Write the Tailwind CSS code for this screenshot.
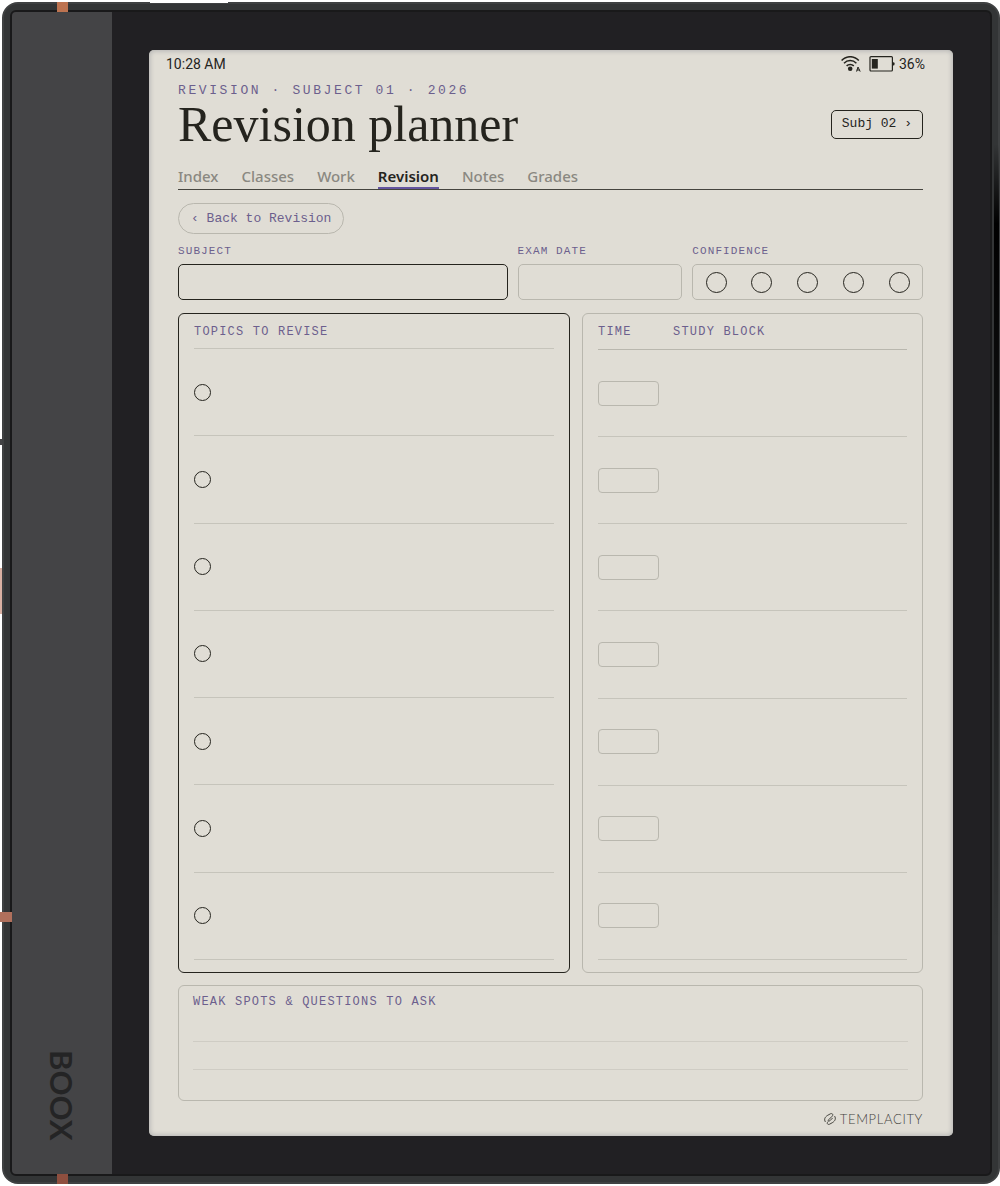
<!DOCTYPE html>
<html lang="en">
<head>
    <meta charset="UTF-8">
    <meta name="viewport" content="width=device-width, initial-scale=1.0">
    <title>Revision planner</title>
    <script src="https://cdn.jsdelivr.net/npm/@tailwindcss/browser@4"></script>
</head>
<body class="bg-white font-['Roboto',sans-serif] text-[#25241e]">
    <!-- Device body -->
    <div class="min-h-screen flex py-0.5 pl-0.5">
        <div class="relative flex-1 flex p-1.5 rounded-[16px] bg-[#333536] border-2 border-[#3f4142]">
            <!-- Copper antenna strips -->
            <span class="absolute -top-0.5 left-[53px] w-[11px] h-2.5 bg-[#bd7350]"></span>
            <span class="absolute -bottom-0.5 left-[53px] w-[11px] h-2.5 bg-[#8f4f3f]"></span>
            <span class="absolute top-[908px] -left-1 w-3 h-2.5 bg-[#b0705c]"></span>
            <span class="absolute top-[564px] -left-1 w-0.5 h-[46px] bg-[#d9b0a2]"></span>
            <!-- Power button gap and side highlights -->
            <span class="absolute -top-0.5 left-[146px] w-[78px] h-px bg-white"></span>
            <span class="absolute top-[435px] -left-1 w-0.5 h-1.5 bg-[#444446]"></span>
            <span class="absolute top-[140px] bottom-[240px] -right-px w-[5px] bg-linear-to-b from-transparent via-black to-transparent from-0% via-10% to-100%"></span>

            <div class="flex-1 flex border-2 border-[#19191a] rounded-[6px] bg-[#212023]">
                <!-- Spine -->
                <div class="w-[100px] shrink-0 flex items-end justify-center pb-[34px] bg-[#444446] rounded-l-[4px]">
                    <span class="[writing-mode:vertical-rl] font-['Lato',sans-serif] font-bold text-[31px] leading-7 text-[#242425]">BOOX</span>
                </div>

                <!-- Bezel -->
                <div class="flex-1 flex px-[37px] py-[38px]">
                    <!-- Screen -->
                    <main class="flex-1 flex flex-col pl-[29px] pr-[30px] bg-[#e0ddd5] rounded-[5px] shadow-[inset_0_0_5px_1px_#b4b4b3]">
                        <!-- Status bar -->
                        <div class="-ml-3 -mr-0.5 h-7 flex items-center justify-between text-sm">
                            <span>10:28 AM</span>
                            <div class="flex items-center gap-1">
                                <svg class="w-5 h-4 mr-1" viewBox="0 0 20 16" fill="none" stroke="#25241e" stroke-width="1.5" aria-hidden="true">
                                    <path d="M.6 4.600C5.300-.6 13.100-.6 17.800 4.600M3 7.200c3.500-3.600 8.900-3.600 12.400 0M5.600 9.900c2-2 5.200-2 7.200 0"/>
                                    <circle cx="9.200" cy="12.800" r="2.300" fill="#25241e" stroke="none"/>
                                    <path d="M15.600 15.600l1.400-4.600 2.200 4.600M15.700 14h3" stroke-width="1"/>
                                </svg>
                                <svg class="w-[26px] h-4" viewBox="0 0 26 16" fill="none" aria-hidden="true">
                                    <rect x="1" y=".6" width="22.400" height="14.400" rx="1" stroke="#25241e" stroke-width="1.200"/>
                                    <rect x="2.800" y="3" width="6" height="9.600" fill="#25241e"/>
                                    <rect x="23.500" y="6.200" width="2" height="3.200" rx="1" fill="#25241e"/>
                                </svg>
                                <span>36%</span>
                            </div>
                        </div>

                        <!-- Header -->
                        <header class="pt-[5px] flex items-center justify-between">
                            <div>
                                <p class="font-['Liberation_Mono',monospace] text-[13px] leading-4 tracking-[0.2em] text-[#6c5f8d]">REVISION · SUBJECT 01 · 2026</p>
                                <h1 class="mb-1.5 font-['Liberation_Serif',serif] text-[50px] leading-[50px]">Revision planner</h1>
                            </div>
                            <button type="button" class="mt-2.5 h-[29px] px-2.5 border border-[#25241e] rounded-[5px] font-['Liberation_Mono',monospace] text-[13px]">Subj 02 ›</button>
                        </header>

                        <!-- Tabs -->
                        <nav class="mt-3 flex gap-[23px] border-b border-[#45443e] font-['Noto_Sans',sans-serif] text-[15px] leading-[18px] font-medium text-[#8a8881]">
                            <a href="#" class="pb-0.5">Index</a>
                            <a href="#" class="pb-0.5">Classes</a>
                            <a href="#" class="pb-0.5">Work</a>
                            <a href="#" class="pb-0.5 font-semibold text-[#25241e] border-b-2 border-[#6455a0]">Revision</a>
                            <a href="#" class="pb-0.5">Notes</a>
                            <a href="#" class="pb-0.5">Grades</a>
                        </nav>

                        <a href="#" class="mt-[13px] self-start h-[31px] px-3 flex items-center border border-[#b9b7ae] rounded-full font-['Liberation_Mono',monospace] text-[13px] text-[#6c5f8d]">‹ Back to Revision</a>

                        <!-- Subject fields -->
                        <div class="mt-2.5 grid grid-cols-[2fr_1fr_1.4fr] gap-2.5 font-['Liberation_Mono',monospace] text-[11px] leading-[14px] tracking-[0.1em] text-[#6c5f8d]">
                            <div class="flex flex-col gap-1.5">
                                <label for="subject">SUBJECT</label>
                                <input id="subject" type="text" class="w-full h-9 px-3 border border-[#25241e] rounded-[5px]">
                            </div>
                            <div class="flex flex-col gap-1.5">
                                <label for="exam-date">EXAM DATE</label>
                                <input id="exam-date" type="text" class="w-full h-9 px-3 border border-[#b9b7ae] rounded-[5px]">
                            </div>
                            <div class="flex flex-col gap-1.5" role="radiogroup" aria-labelledby="confidence">
                                <span id="confidence">CONFIDENCE</span>
                                <div class="h-9 flex items-center justify-around border border-[#b9b7ae] rounded-[5px]">
                                    <input type="radio" name="confidence" aria-label="1" class="appearance-none size-[21px] rounded-full border border-[#25241e] checked:bg-[#25241e]">
                                    <input type="radio" name="confidence" aria-label="2" class="appearance-none size-[21px] rounded-full border border-[#25241e] checked:bg-[#25241e]">
                                    <input type="radio" name="confidence" aria-label="3" class="appearance-none size-[21px] rounded-full border border-[#25241e] checked:bg-[#25241e]">
                                    <input type="radio" name="confidence" aria-label="4" class="appearance-none size-[21px] rounded-full border border-[#25241e] checked:bg-[#25241e]">
                                    <input type="radio" name="confidence" aria-label="5" class="appearance-none size-[21px] rounded-full border border-[#25241e] checked:bg-[#25241e]">
                                </div>
                            </div>
                        </div>

                        <!-- Topics and study blocks, rows are added below -->
                        <div class="mt-[13px] flex-1 grid grid-cols-[1.15fr_1fr] gap-3">
                            <section class="flex flex-col px-[15px] pb-3 border border-[#25241e] rounded-[6px]">
                                <h2 class="h-[35px] pt-0.5 flex items-center border-b border-[#c6c4bb] font-['Liberation_Mono',monospace] text-xs tracking-[0.1em] text-[#6c5f8d]">TOPICS TO REVISE</h2>
                                <ul id="topics" class="flex-1 flex flex-col"></ul>
                            </section>
                            <section class="flex flex-col px-[15px] pb-3 border border-[#b9b7ae] rounded-[6px]">
                                <div class="h-9 flex items-center gap-3.5 border-b border-[#b9b7ae] font-['Liberation_Mono',monospace] text-xs tracking-[0.1em] text-[#6c5f8d]">
                                    <h2 class="w-[61px]">TIME</h2>
                                    <h2>STUDY BLOCK</h2>
                                </div>
                                <ul id="blocks" class="flex-1 flex flex-col"></ul>
                            </section>
                        </div>

                        <!-- Weak spots -->
                        <section class="mt-3 h-[116px] px-3.5 border border-[#b9b7ae] rounded-[6px]">
                            <h2 class="pt-2 pb-1 font-['Liberation_Mono',monospace] text-xs leading-4 tracking-[0.1em] text-[#6c5f8d]">WEAK SPOTS &amp; QUESTIONS TO ASK</h2>
                            <input type="text" aria-label="Weak spot 1" class="block w-full h-7 border-b border-[#cfccc4]">
                            <input type="text" aria-label="Weak spot 2" class="block w-full h-7 border-b border-[#cfccc4]">
                        </section>

                        <footer class="h-[35px] flex items-center justify-end gap-1 text-[#45443e]">
                            <svg class="w-3 h-3" viewBox="0 0 12 12" fill="none" stroke="currentColor" stroke-width="1" stroke-linecap="round" stroke-linejoin="round" aria-hidden="true">
                                <path d="M1.200 8.600C-.2 6.200 1 4.200 3.200 2.600L6.400.8c2-.8 3.200.8 1.800 2.400L4.600 6.800c-1 1.200.2 2 1.200 1l2.600-2.600"/>
                                <path d="M10.800 3.400c1.400 2.400.2 4.400-2 6l-3.200 1.800c-2 .8-3.200-.8-1.800-2.400"/>
                            </svg>
                            <span class="font-['Lato',sans-serif] font-light text-[13px] leading-4 tracking-[0.05em]">TEMPLACITY</span>
                        </footer>
                    </main>
                </div>
            </div>
        </div>
    </div>

    <script>
        const topics = document.getElementById('topics');
        const blocks = document.getElementById('blocks');

        for (let i = 1; i <= 7; i++) {
            topics.innerHTML += `
                <li class="flex-1 flex items-center gap-3 border-b border-[#c6c4bb]">
                    <input type="checkbox" aria-label="Topic ${i} done" class="appearance-none size-[17px] shrink-0 rounded-full border border-[#25241e] checked:bg-[#25241e]">
                    <input type="text" aria-label="Topic ${i}" class="flex-1 min-w-0">
                </li>`;
            blocks.innerHTML += `
                <li class="flex-1 flex items-center gap-3.5 border-b border-[#c6c4bb]">
                    <input type="text" aria-label="Time ${i}" class="w-[61px] h-[25px] px-1 border border-[#b9b7ae] rounded-[4px]">
                    <input type="text" aria-label="Study block ${i}" class="flex-1 min-w-0">
                </li>`;
        }
    </script>
</body>
</html>
